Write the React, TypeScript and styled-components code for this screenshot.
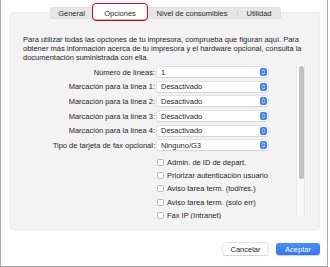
import React from 'react'
import styled, { createGlobalStyle } from 'styled-components'

const GlobalStyle = createGlobalStyle`
  html, body {
    margin: 0;
    padding: 0;
    background: #ffffff;
  }
  body {
    font-family: 'Liberation Sans', Arial, sans-serif;
    color: #262626;
  }
`

const Window = styled.div`
  box-sizing: border-box;
  width: 328px;
  height: 267px;
  background: #ffffff;
  border-left: 1px solid #a9a9a9;
  border-right: 1px solid #a9a9a9;
  border-bottom: 1px solid #a9a9a9;
  padding-top: 7px;
  display: flex;
  flex-direction: column;
`

const TabRow = styled.div`
  display: flex;
  justify-content: flex-start;
  padding-left: 49px;
  position: relative;
  z-index: 1;
`

const Tabs = styled.div`
  display: flex;
  align-items: center;
  height: 12px;
  background: #e6e6e6;
  border-radius: 4px;
  box-shadow: inset 0 0 0 0.5px #d8d8d8;
`

const Tab = styled.div<{ $w: number; $active?: boolean; $sep?: boolean }>`
  position: relative;
  box-sizing: border-box;
  width: ${({ $w }) => $w}px;
  height: 12px;
  display: flex;
  align-items: center;
  justify-content: center;
  font-size: 7.5px;
  color: #2a2a2a;
  border-radius: 3px;
  background: ${({ $active }) => ($active ? '#ffffff' : 'transparent')};
  box-shadow: ${({ $active }) => ($active ? '0 0.5px 1px rgba(0,0,0,0.25)' : 'none')};
  ${({ $sep }) =>
    $sep &&
    `&::before {
      content: '';
      position: absolute;
      left: 0;
      top: 3px;
      bottom: 3px;
      width: 1px;
      background: #cfcfcf;
    }`}
  ${({ $active }) =>
    $active &&
    `&::after {
      content: '';
      position: absolute;
      left: -1px;
      right: -1px;
      top: -4px;
      bottom: -2px;
      border: 1.5px solid #e2001a;
      border-radius: 4px;
    }`}
`

const Panel = styled.div`
  margin: -7px 0 0 9px;
  width: 310px;
  height: 218px;
  box-sizing: border-box;
  background: #f3f3f3;
  border-radius: 4px;
  box-shadow: inset 0 0 0 0.5px #e6e6e6;
  padding-top: 23px;
  display: flex;
  flex-direction: column;
`

const Intro = styled.p`
  margin: 0 0 0 13px;
  width: 285px;
  font-size: 7.5px;
  line-height: 9px;
  color: #262626;
`

const ScrollArea = styled.div`
  margin-top: 2px;
  height: 155px;
  display: flex;
`

const Content = styled.div`
  width: 286px;
  overflow: hidden;
  padding-top: 3px;
  display: flex;
  flex-direction: column;
`

const FieldRow = styled.div`
  display: grid;
  grid-template-columns: 145px 111px;
  column-gap: 2px;
  align-items: center;
  height: 10px;
  margin-bottom: 4.7px;
`

const Label = styled.span`
  text-align: right;
  font-size: 7.5px;
  color: #262626;
  white-space: nowrap;
`

const Popup = styled.div`
  box-sizing: border-box;
  height: 10px;
  background: #ffffff;
  border-radius: 2px;
  box-shadow: 0 0 0 0.5px #d4d4d4, 0 0.5px 1px rgba(0, 0, 0, 0.12);
  display: flex;
  align-items: center;
  justify-content: space-between;
  padding: 0 1px 0 4px;
  font-size: 7.5px;
  color: #262626;
`

const Stepper = styled.span`
  width: 7px;
  height: 8px;
  border-radius: 2px;
  background: #3b83f6;
  display: flex;
  align-items: center;
  justify-content: center;
`

const Checks = styled.div`
  margin-top: 2.5px;
  display: flex;
  flex-direction: column;
`

const CheckRow = styled.label`
  display: flex;
  align-items: center;
  gap: 3px;
  height: 9px;
  margin: 0 0 4.4px 147px;
  font-size: 7.5px;
  color: #262626;
  white-space: nowrap;
`

const Box = styled.span`
  box-sizing: border-box;
  width: 7px;
  height: 7px;
  border-radius: 1.5px;
  background: #ffffff;
  border: 0.5px solid #b9b9b9;
  flex: none;
`

const Track = styled.div`
  box-sizing: border-box;
  width: 9px;
  height: 152px;
  background: #f8f8f8;
  border-left: 1px solid #e9e9e9;
  border-right: 1px solid #e9e9e9;
  padding: 2px 1px 0 2px;
`

const Thumb = styled.div`
  width: 5px;
  height: 113px;
  border-radius: 3px;
  background: #c1c1c1;
`

const Footer = styled.div`
  margin-top: 13px;
  display: flex;
  justify-content: flex-end;
  gap: 8px;
  padding-right: 7px;
`

const Button = styled.button<{ $primary?: boolean }>`
  box-sizing: border-box;
  width: ${({ $primary }) => ($primary ? 44 : 45)}px;
  height: 12px;
  padding: 0;
  border: none;
  border-radius: 3px;
  font-family: 'Liberation Sans', Arial, sans-serif;
  font-size: 7.5px;
  color: ${({ $primary }) => ($primary ? '#ffffff' : '#262626')};
  background: ${({ $primary }) =>
    $primary ? 'linear-gradient(#4a90f8, #2f78f2)' : '#ffffff'};
  box-shadow: ${({ $primary }) =>
    $primary
      ? '0 0.5px 1px rgba(0,0,0,0.2)'
      : '0 0 0 0.5px #cfcfcf, 0 0.5px 1px rgba(0,0,0,0.15)'};
`

const Arrows = () => (
  <svg width="5" height="6" viewBox="0 0 5 6">
    <path d="M1 2.3 L2.5 0.9 L4 2.3 M1 3.7 L2.5 5.1 L4 3.7" stroke="#fff" strokeWidth="0.8" fill="none" />
  </svg>
)

const fields = [
  ['Número de líneas:', '1'],
  ['Marcación para la línea 1:', 'Desactivado'],
  ['Marcación para la línea 2:', 'Desactivado'],
  ['Marcación para la línea 3:', 'Desactivado'],
  ['Marcación para la línea 4:', 'Desactivado'],
  ['Tipo de tarjeta de fax opcional:', 'Ninguno/G3'],
]

const checks = [
  'Admin. de ID de depart.',
  'Priorizar autenticación usuario',
  'Aviso tarea term. (tod/res.)',
  'Aviso tarea term. (solo err)',
  'Fax IP (Intranet)',
]

const App = () => {
  return (
    <>
      <GlobalStyle />
      <Window>
        <TabRow>
          <Tabs>
            <Tab $w={43}>General</Tab>
            <Tab $w={54} $active>Opciones</Tab>
            <Tab $w={90}>Nivel de consumibles</Tab>
            <Tab $w={44} $sep>Utilidad</Tab>
          </Tabs>
        </TabRow>
        <Panel>
          <Intro>
            Para utilizar todas las opciones de tu impresora, comprueba que figuran aquí. Para
            obtener más información acerca de tu impresora y el hardware opcional, consulta la
            documentación suministrada con ella.
          </Intro>
          <ScrollArea>
            <Content>
              {fields.map(([label, value]) => (
                <FieldRow key={label}>
                  <Label>{label}</Label>
                  <Popup>
                    {value}
                    <Stepper>
                      <Arrows />
                    </Stepper>
                  </Popup>
                </FieldRow>
              ))}
              <Checks>
                {checks.map((c) => (
                  <CheckRow key={c}>
                    <Box />
                    {c}
                  </CheckRow>
                ))}
              </Checks>
            </Content>
            <Track>
              <Thumb />
            </Track>
          </ScrollArea>
        </Panel>
        <Footer>
          <Button>Cancelar</Button>
          <Button $primary>Aceptar</Button>
        </Footer>
      </Window>
    </>
  )
}

export default App
